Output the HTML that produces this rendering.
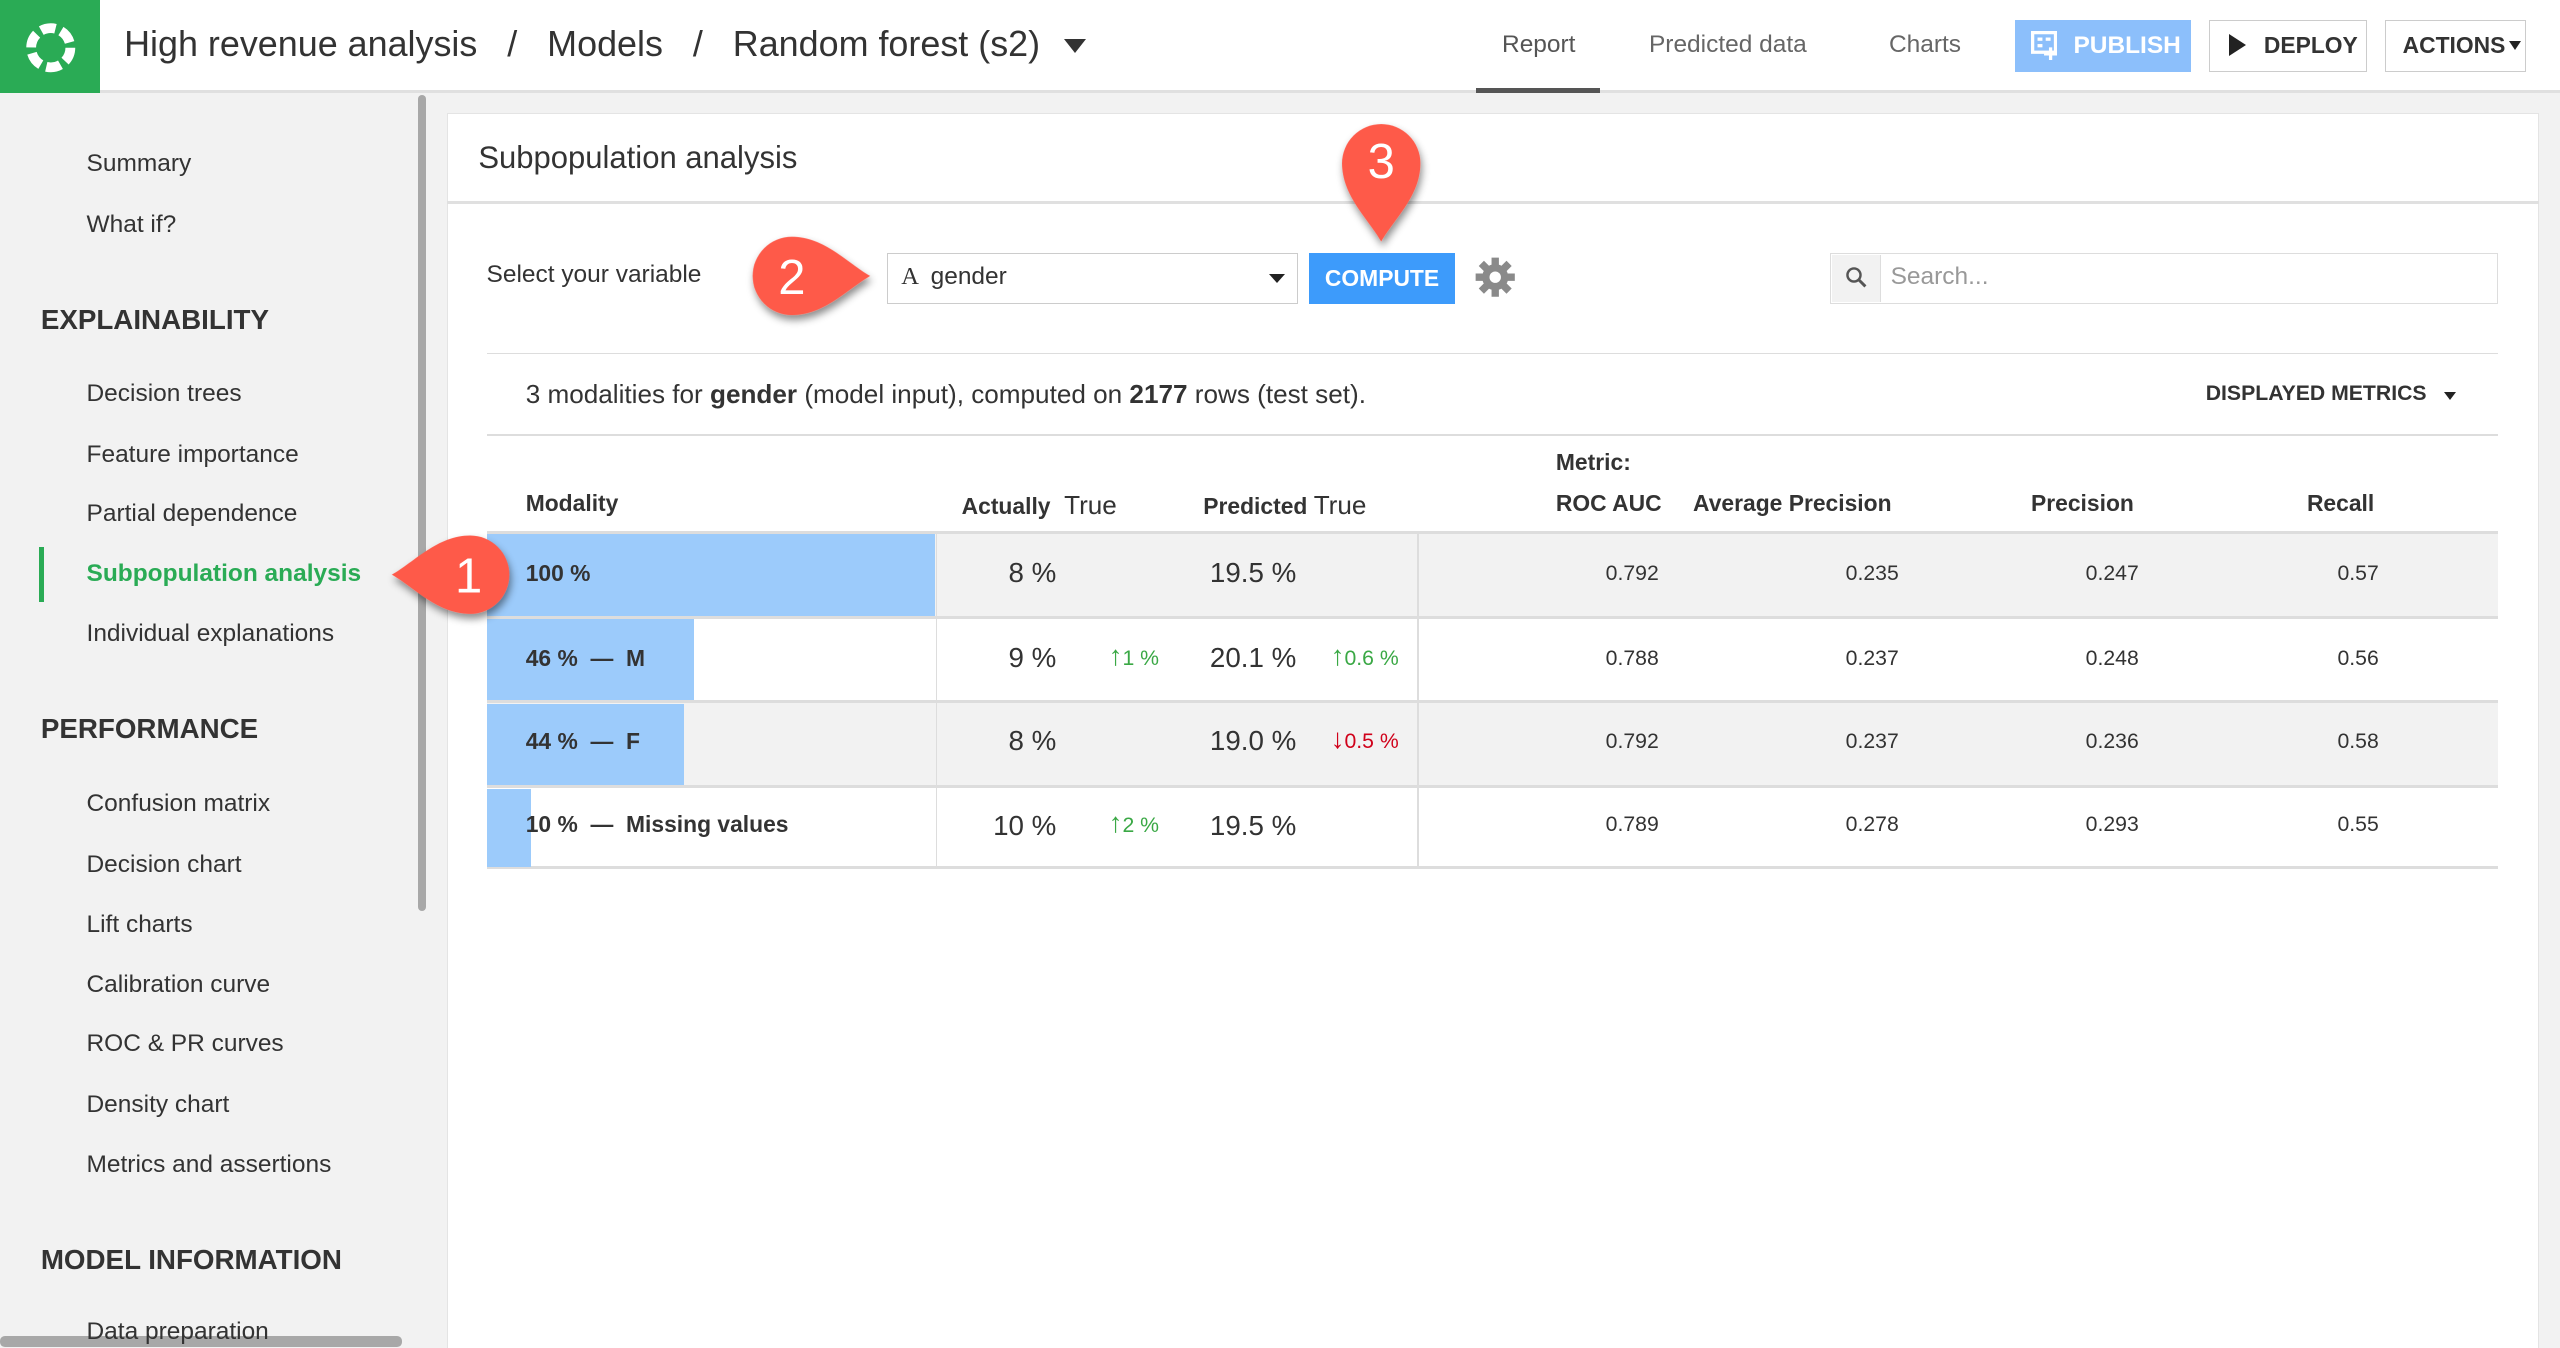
<!DOCTYPE html>
<html><head><meta charset="utf-8"><style>
*{box-sizing:border-box;margin:0;padding:0}
html,body{width:2560px;height:1348px;overflow:hidden;background:#f2f2f2}
#root{zoom:1.632653;width:1568px;height:826px;position:relative;font-family:"Liberation Sans",sans-serif;color:#333;background:#f2f2f2;overflow:hidden}
.a{position:absolute;white-space:nowrap}
.hdr{left:0;top:0;width:1568px;height:57px;background:#fff;border-bottom:2px solid #e0e0e0}
.side{font-size:15px;color:#333}
.sec{font-size:17px;font-weight:bold;color:#333}
.card{left:274px;top:69px;width:1281px;height:770px;background:#fff;border:1px solid #e4e4e4}
.num{font-size:17px;color:#333;text-align:right}
.sm{font-size:13px;color:#333;text-align:right}
.up{font-size:13px;color:#3aa845}
.dn{font-size:13px;color:#d0021b}
.up b,.dn b{font-size:17px;font-weight:normal}
.th{font-size:14px;font-weight:bold;color:#333}
</style></head><body><div id="root">
<div class="a hdr"></div>
<div class="a" style="left:0;top:0;width:61px;height:57px;background:#2aab55"></div>
<svg class="a" style="left:14px;top:12px" width="34" height="34" viewBox="0 0 34 34"><circle cx="17" cy="17" r="12" fill="none" stroke="#fff" stroke-width="6" stroke-dasharray="9 3.6"/></svg>
<div class="a" style="left:76px;top:14px;font-size:22px;color:#333">High revenue analysis &nbsp; / &nbsp; Models &nbsp; / &nbsp; Random forest (s2)</div>
<div class="a" style="left:652px;top:24px;width:0;height:0;border-left:7px solid transparent;border-right:7px solid transparent;border-top:9px solid #333"></div>
<div class="a" style="left:920px;top:19px;font-size:15px;color:#555">Report</div>
<div class="a" style="left:904px;top:54px;width:76px;height:3px;background:#555"></div>
<div class="a" style="left:1010px;top:19px;font-size:15px;color:#666">Predicted data</div>
<div class="a" style="left:1157px;top:19px;font-size:15px;color:#666">Charts</div>
<div class="a" style="left:1234px;top:12px;width:108px;height:32px;background:#8cbffb;color:#fff;font-size:15px;font-weight:bold;line-height:32px;padding-left:36px">PUBLISH</div>
<svg class="a" style="left:1244px;top:19px" width="16" height="18"><rect x="1" y="1" width="14" height="12" fill="none" stroke="#fff" stroke-width="2"/><rect x="4" y="4" width="3" height="2" fill="#fff"/><rect x="4" y="8" width="3" height="2" fill="#fff"/><rect x="9" y="4" width="3" height="2" fill="#fff"/><path d="M12 10v8M8 14h8" stroke="#fff" stroke-width="2"/></svg>
<div class="a" style="left:1353px;top:12px;width:97px;height:32px;border:1px solid #ccc;background:#fff;font-size:14px;font-weight:bold;line-height:30px;padding-left:33px;color:#333">DEPLOY</div>
<div class="a" style="left:1365px;top:21px;width:0;height:0;border-top:7px solid transparent;border-bottom:7px solid transparent;border-left:11px solid #222"></div>
<div class="a" style="left:1461px;top:12px;width:86px;height:32px;border:1px solid #ccc;background:#fff;font-size:14px;font-weight:bold;line-height:30px;padding-left:10px;color:#333">ACTIONS</div>
<div class="a" style="left:1537px;top:25px;width:0;height:0;border-left:4px solid transparent;border-right:4px solid transparent;border-top:6px solid #222"></div>

<div class="a" style="left:256px;top:58px;width:5px;height:500px;background:#a8a8a8;border-radius:3px"></div>
<div class="a" style="left:0;top:818px;width:246px;height:7px;background:#a8a8a8;border-radius:3px"></div>
<div class="a side" style="left:53px;top:92px">Summary</div>
<div class="a side" style="left:53px;top:129px">What if?</div>
<div class="a sec" style="left:25px;top:186px">EXPLAINABILITY</div>
<div class="a side" style="left:53px;top:233px">Decision trees</div>
<div class="a side" style="left:53px;top:270px">Feature importance</div>
<div class="a side" style="left:53px;top:306px">Partial dependence</div>
<div class="a" style="left:24px;top:335px;width:3px;height:34px;background:#2aab55"></div>
<div class="a side" style="left:53px;top:343px;color:#2aab55;font-weight:bold">Subpopulation analysis</div>
<div class="a side" style="left:53px;top:380px">Individual explanations</div>
<div class="a sec" style="left:25px;top:437px">PERFORMANCE</div>
<div class="a side" style="left:53px;top:484px">Confusion matrix</div>
<div class="a side" style="left:53px;top:521px">Decision chart</div>
<div class="a side" style="left:53px;top:558px">Lift charts</div>
<div class="a side" style="left:53px;top:595px">Calibration curve</div>
<div class="a side" style="left:53px;top:631px">ROC &amp; PR curves</div>
<div class="a side" style="left:53px;top:668px">Density chart</div>
<div class="a side" style="left:53px;top:705px">Metrics and assertions</div>
<div class="a sec" style="left:25px;top:762px">MODEL INFORMATION</div>
<div class="a side" style="left:53px;top:807px">Data preparation</div>

<div class="a card"></div>
<div class="a" style="left:293px;top:86px;font-size:19px;color:#333">Subpopulation analysis</div>
<div class="a" style="left:274px;top:123px;width:1281px;height:2px;background:#e0e0e0"></div>
<div class="a" style="left:298px;top:160px;font-size:15px">Select your variable</div>
<div class="a" style="left:543px;top:155px;width:252px;height:31px;border:1px solid #ccc;background:#fff"></div>
<div class="a" style="left:552px;top:161px;font-size:15px;font-family:'Liberation Serif',serif;color:#333">A</div>
<div class="a" style="left:570px;top:161px;font-size:15px">gender</div>
<div class="a" style="left:777px;top:168px;border-left:5px solid transparent;border-right:5px solid transparent;border-top:6px solid #222"></div>
<div class="a" style="left:802px;top:155px;width:89px;height:31px;background:#3d9bfb;color:#fff;font-size:14px;font-weight:bold;text-align:center;line-height:31px">COMPUTE</div>
<svg class="a" style="left:903px;top:157px" width="26" height="26" viewBox="0 0 26 26"><g fill="#8a8a8a"><circle cx="13" cy="13" r="8"/><g stroke="#8a8a8a" stroke-width="4.5"><path d="M13 1v24M1 13h24M4.5 4.5l17 17M21.5 4.5l-17 17"/></g></g><circle cx="13" cy="13" r="3.5" fill="#fff"/></svg>
<div class="a" style="left:1121px;top:155px;width:409px;height:31px;border:1px solid #ddd;background:#fff"></div>
<div class="a" style="left:1122px;top:156px;width:30px;height:29px;background:#f2f2f2;border-right:1px solid #ddd"></div>
<svg class="a" style="left:1130px;top:163px" width="14" height="14"><circle cx="5.5" cy="5.5" r="4" fill="none" stroke="#555" stroke-width="1.5"/><path d="M8.5 8.5l4 4" stroke="#555" stroke-width="1.8"/></svg>
<div class="a" style="left:1158px;top:161px;font-size:15px;color:#999">Search...</div>

<div class="a" style="left:298px;top:216px;width:1232px;height:1px;background:#ddd"></div>
<div class="a" style="left:322px;top:232px;font-size:16px">3 modalities for <b>gender</b> (model input), computed on <b>2177</b> rows (test set).</div>
<div class="a" style="left:1351px;top:234px;font-size:13px;font-weight:bold">DISPLAYED METRICS</div>
<div class="a" style="left:1497px;top:240px;border-left:4px solid transparent;border-right:4px solid transparent;border-top:5px solid #222"></div>
<div class="a" style="left:298px;top:266px;width:1232px;height:1px;background:#ddd"></div>

<div class="a th" style="left:953px;top:275px">Metric:</div>
<div class="a th" style="left:322px;top:300px">Modality</div>
<div class="a th" style="left:589px;top:300px">Actually <span style="font-weight:normal;font-size:16px">&nbsp;True</span></div>
<div class="a th" style="left:737px;top:300px">Predicted <span style="font-weight:normal;font-size:16px">True</span></div>
<div class="a th" style="left:953px;top:300px">ROC AUC</div>
<div class="a th" style="left:1037px;top:300px">Average Precision</div>
<div class="a th" style="left:1244px;top:300px">Precision</div>
<div class="a th" style="left:1413px;top:300px">Recall</div>

<div class="a" style="left:298px;top:325px;width:1232px;height:52px;background:#f2f2f2;border-top:2px solid #ddd"></div>
<div class="a" style="left:298px;top:377px;width:1232px;height:52px;background:#fff;border-top:2px solid #ddd"></div>
<div class="a" style="left:298px;top:429px;width:1232px;height:52px;background:#f2f2f2;border-top:2px solid #ddd"></div>
<div class="a" style="left:298px;top:481px;width:1232px;height:51px;background:#fff;border-top:2px solid #ddd;border-bottom:2px solid #ddd"></div>
<div class="a" style="left:298px;top:327px;width:275px;height:50px;background:#9ccbfb"></div>
<div class="a" style="left:298px;top:379px;width:127px;height:50px;background:#9ccbfb"></div>
<div class="a" style="left:298px;top:431px;width:121px;height:50px;background:#9ccbfb"></div>
<div class="a" style="left:298px;top:483px;width:27px;height:48px;background:#9ccbfb"></div>
<div class="a" style="left:573px;top:325px;width:1px;height:206px;background:#ddd"></div>
<div class="a" style="left:868px;top:325px;width:1px;height:206px;background:#ddd"></div>

<div class="a th" style="left:322px;top:343px">100 %</div>
<div class="a th" style="left:322px;top:395px">46 % &nbsp;— &nbsp;M</div>
<div class="a th" style="left:322px;top:446px">44 % &nbsp;— &nbsp;F</div>
<div class="a th" style="left:322px;top:497px">10 % &nbsp;— &nbsp;Missing values</div>

<div class="a num" style="right:921px;top:341px">8 %</div>
<div class="a num" style="right:921px;top:393px">9 %</div>
<div class="a num" style="right:921px;top:444px">8 %</div>
<div class="a num" style="right:921px;top:496px">10 %</div>
<div class="a up" style="left:679px;top:392px"><b>↑</b>1 %</div>
<div class="a up" style="left:679px;top:494px"><b>↑</b>2 %</div>
<div class="a num" style="right:774px;top:341px">19.5 %</div>
<div class="a num" style="right:774px;top:393px">20.1 %</div>
<div class="a num" style="right:774px;top:444px">19.0 %</div>
<div class="a num" style="right:774px;top:496px">19.5 %</div>
<div class="a up" style="left:815px;top:392px"><b>↑</b>0.6 %</div>
<div class="a dn" style="left:815px;top:443px"><b>↓</b>0.5 %</div>

<div class="a sm" style="right:552px;top:344px">0.792</div><div class="a sm" style="right:405px;top:344px">0.235</div><div class="a sm" style="right:258px;top:344px">0.247</div><div class="a sm" style="right:111px;top:344px">0.57</div>
<div class="a sm" style="right:552px;top:396px">0.788</div><div class="a sm" style="right:405px;top:396px">0.237</div><div class="a sm" style="right:258px;top:396px">0.248</div><div class="a sm" style="right:111px;top:396px">0.56</div>
<div class="a sm" style="right:552px;top:447px">0.792</div><div class="a sm" style="right:405px;top:447px">0.237</div><div class="a sm" style="right:258px;top:447px">0.236</div><div class="a sm" style="right:111px;top:447px">0.58</div>
<div class="a sm" style="right:552px;top:498px">0.789</div><div class="a sm" style="right:405px;top:498px">0.278</div><div class="a sm" style="right:258px;top:498px">0.293</div><div class="a sm" style="right:111px;top:498px">0.55</div>

<svg class="a" style="left:0;top:0" width="1568" height="826">
<defs><filter id="s" x="-50%" y="-50%" width="200%" height="200%"><feDropShadow dx="1" dy="3" stdDeviation="2.5" flood-color="#000" flood-opacity="0.45"/></filter>
<path id="m" d="M0,0 C-8,-14 -24,-28 -24,-48 A24,24 0 1,1 24,-48 C24,-28 8,-14 0,0 Z" fill="#fe5a4a"/></defs>
<g filter="url(#s)">
<use href="#m" transform="translate(240,352) rotate(90)"/>
<use href="#m" transform="translate(533,169) rotate(-90)"/>
<use href="#m" transform="translate(846,148)"/>
</g>
<g fill="#fff" font-family="Liberation Sans,sans-serif" font-size="30" text-anchor="middle">
<text x="287" y="363">1</text><text x="485" y="180">2</text><text x="846" y="109">3</text></g>
</svg>
</div></body></html>
